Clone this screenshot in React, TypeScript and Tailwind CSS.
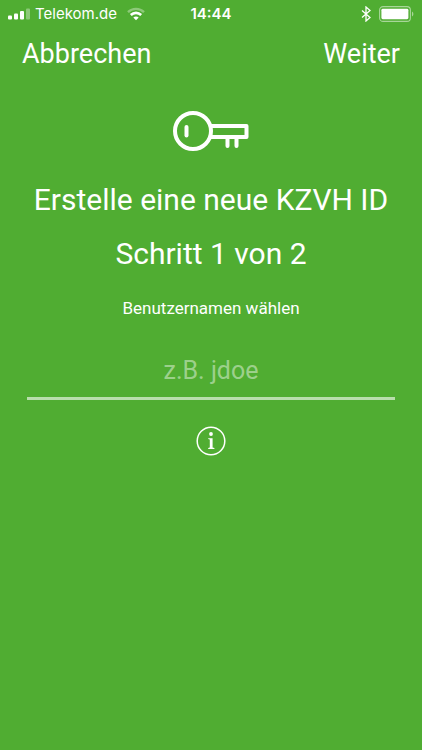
function SignalIcon() {
  return (
    <svg viewBox="0 0 23 12" className="w-[23px] h-3" fill="white" aria-hidden="true">
      <rect x="0" y="7.5" width="4" height="4" rx="1" />
      <rect x="6" y="5.5" width="4" height="6" rx="1" />
      <rect x="12" y="3" width="4" height="8.5" rx="1" />
      <rect x="18" y="0.5" width="4" height="11" rx="1" opacity="0.35" />
    </svg>
  );
}

function WifiIcon() {
  return (
    <svg viewBox="0 0 18 14" className="w-[18px] h-3.5" fill="none" stroke="white" aria-hidden="true">
      <path d="M1 5.2C5.4 0.8 12.6 0.8 17 5.2" strokeWidth="2.4" opacity="0.35" />
      <path d="M3.8 8C6.8 5.1 11.2 5.1 14.2 8" strokeWidth="2.6" />
      <path d="M6.3 10.6C7.8 9.1 10.2 9.1 11.7 10.6L9 13.2Z" fill="white" stroke="none" />
    </svg>
  );
}

function BluetoothIcon() {
  return (
    <svg viewBox="0 0 10 16" className="w-2.5 h-4" fill="none" stroke="white" strokeWidth="1.3" aria-hidden="true">
      <path d="M1 4.5L9 11.5L5 15V1L9 4.5L1 11.5" />
    </svg>
  );
}

function BatteryIcon() {
  return (
    <svg viewBox="0 0 35 16" className="w-[35px] h-4" aria-hidden="true">
      <rect x="0.6" y="0.6" width="30.8" height="14.8" rx="3.5" fill="none" stroke="white" strokeWidth="1.1" opacity="0.5" />
      <rect x="2.4" y="2.8" width="27" height="10.4" rx="1.4" fill="white" />
      <path d="M33 5.5C34.8 6.2 34.8 9.8 33 10.5Z" fill="white" opacity="0.5" />
    </svg>
  );
}

function KeyIcon() {
  return (
    <svg viewBox="0 0 76 42" className="w-[76px] h-[42px]" fill="none" stroke="white" strokeWidth="4" strokeLinecap="round" strokeLinejoin="round" aria-hidden="true">
      <circle cx="20" cy="21" r="18" />
      <path d="M13.5 17V25.5" />
      <path d="M38 16H73.5V27H38" />
      <path d="M54.5 27V36M63.5 27V36" />
    </svg>
  );
}

function InfoIcon() {
  return (
    <svg viewBox="0 0 30 30" className="w-[30px] h-[30px]" aria-hidden="true">
      <circle cx="15" cy="15" r="13.8" fill="none" stroke="white" strokeWidth="1.5" />
      <circle cx="15" cy="8" r="1.9" fill="white" />
      <path d="M12.2 12.2H16.6V21.5L18.4 22V23H12.2V22L13.8 21.5V13.5L12.2 13.1Z" fill="white" />
    </svg>
  );
}

function StatusBar() {
  return (
    <div className="grid grid-cols-[1fr_auto_1fr] items-center h-7 px-2">
      <div className="flex items-center gap-1">
        <SignalIcon />
        <span className="font-['Inter',sans-serif] text-[15px] leading-5">Telekom.de</span>
        <span className="pl-1.5">
          <WifiIcon />
        </span>
      </div>
      <span className="font-['Inter',sans-serif] text-[15px] leading-5 font-semibold">14:44</span>
      <div className="flex items-center justify-end gap-2">
        <BluetoothIcon />
        <BatteryIcon />
      </div>
    </div>
  );
}

export default function App() {
  return (
    <div className="min-h-screen bg-[#50ad32] text-white font-['Roboto',sans-serif]">
      <StatusBar />
      <nav className="flex items-center justify-between px-[22px] pt-2 text-[27px] leading-9">
        <button type="button">Abbrechen</button>
        <button type="button">Weiter</button>
      </nav>
      <main className="flex flex-col items-center px-[27px] pt-[38px]">
        <KeyIcon />
        <h1 className="pt-[21px] text-center text-[30px] leading-[54px] whitespace-nowrap">
          Erstelle eine neue KZVH ID
          <br />
          Schritt 1 von 2
        </h1>
        <label htmlFor="username" className="pt-[15px] text-[17px] leading-6">
          Benutzernamen wählen
        </label>
        <input
          id="username"
          type="text"
          placeholder="z.B. jdoe"
          className="mt-6 h-14 w-full border-b-3 border-white/60 bg-transparent text-center text-[25px] placeholder:text-white/45 outline-none"
        />
        <button type="button" aria-label="Info" className="mt-[26px]">
          <InfoIcon />
        </button>
      </main>
    </div>
  );
}
